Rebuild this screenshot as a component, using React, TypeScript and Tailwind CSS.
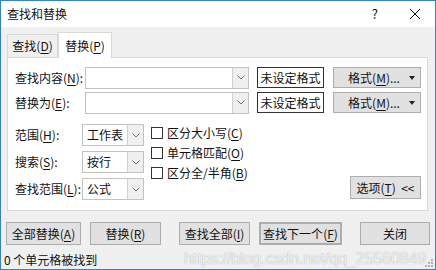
import React from 'react';

const font = { fontFamily: '"Noto Sans CJK SC", "Noto Sans", sans-serif' };

const Key: React.FC<{ k: string }> = ({ k }) => (
    <>
        (<span className="underline underline-offset-2">{k}</span>)
    </>
);

const Arrow: React.FC = () => (
    <svg width="8" height="5" viewBox="0 0 8 5" fill="none">
        <path d="M0.5 0.5 L4 4 L7.5 0.5" stroke="#707070" strokeWidth="1" />
    </svg>
);

const Combo: React.FC<{ value?: string; className: string }> = ({ value, className }) => (
    <div className={`flex h-[22px] border border-[#c2c2c2] bg-white ${className}`}>
        <div className="flex-1 flex items-center pl-[4px] text-[12px] text-[#111]">{value}</div>
        <div className="w-[16px] flex items-center justify-center border-l border-[#d0d0d0] bg-[#f0f0f0]">
            <Arrow />
        </div>
    </div>
);

const Btn: React.FC<{ children: React.ReactNode; className: string }> = ({ children, className }) => (
    <div className={`flex items-center justify-center border border-[#adadad] bg-[#e1e1e1] text-[12px] text-[#111] ${className}`}>
        {children}
    </div>
);

const Check: React.FC<{ children: React.ReactNode }> = ({ children }) => (
    <div className="flex items-center h-[20px]">
        <div className="w-[12px] h-[12px] border border-[#333] bg-white" />
        <span className="ml-[4px] text-[12px] text-[#111]">{children}</span>
    </div>
);

export default function App() {
    return (
        <div className="relative w-[436px] h-[270px] border border-[#2b83da] bg-[#f0f0f0] overflow-hidden" style={font}>
            {/* title bar */}
            <div className="flex items-center h-[26px] bg-white pl-[6px] text-[12px] text-[#111]">
                <span>查找和替换</span>
                <span className="ml-auto mr-[31px] text-[13px]">?</span>
                <svg width="12" height="12" viewBox="0 0 12 12" className="mr-[14px]">
                    <path d="M1 1 L11 11 M11 1 L1 11" stroke="#111" strokeWidth="1" />
                </svg>
            </div>

            {/* tabs */}
            <div className="flex items-end h-[30px] pl-[6px]">
                <div className="flex items-center justify-center w-[51px] h-[23px] border border-b-0 border-[#d9d9d9] bg-[#f0f0f0] text-[12px] text-[#111]">
                    查找<Key k="D" />
                </div>
                <div className="relative z-10 -mb-px flex items-center justify-center w-[54px] h-[26px] border border-b-0 border-[#d9d9d9] bg-white text-[12px] text-[#111]">
                    替换<Key k="P" />
                </div>
            </div>

            {/* panel */}
            <div className="ml-[6px] w-[421px] h-[154px] border border-[#d9d9d9] bg-white pt-[9px] pl-[7px]">
                <div className="flex items-center h-[21px]">
                    <span className="w-[70px] text-[12px] text-[#111]">查找内容<Key k="N" />:</span>
                    <Combo className="w-[164px]" />
                    <div className="ml-[8px] w-[67px] h-[21px] flex items-center justify-center border border-[#333] text-[12px] text-[#111]">未设定格式</div>
                    <Btn className="ml-[9px] w-[88px] h-[21px] relative">
                        <span className="mr-[6px]">格式<Key k="M" />...</span>
                        <span className="absolute right-[5px] top-[8px] w-0 h-0 border-l-[3px] border-r-[3px] border-t-[4px] border-l-transparent border-r-transparent border-t-[#222]" />
                    </Btn>
                </div>
                <div className="flex items-center h-[21px] mt-[4px]">
                    <span className="w-[70px] text-[12px] text-[#111]">替换为<Key k="E" />:</span>
                    <Combo className="w-[164px]" />
                    <div className="ml-[8px] w-[67px] h-[21px] flex items-center justify-center border border-[#333] text-[12px] text-[#111]">未设定格式</div>
                    <Btn className="ml-[9px] w-[88px] h-[21px] relative">
                        <span className="mr-[6px]">格式<Key k="M" />...</span>
                        <span className="absolute right-[5px] top-[8px] w-0 h-0 border-l-[3px] border-r-[3px] border-t-[4px] border-l-transparent border-r-transparent border-t-[#222]" />
                    </Btn>
                </div>

                <div className="flex mt-[11px]">
                    <div className="flex flex-col gap-[5px]">
                        <div className="flex items-center">
                            <span className="w-[67px] text-[12px] text-[#111]">范围<Key k="H" />:</span>
                            <Combo value="工作表" className="w-[62px]" />
                        </div>
                        <div className="flex items-center">
                            <span className="w-[67px] text-[12px] text-[#111]">搜索<Key k="S" />:</span>
                            <Combo value="按行" className="w-[62px]" />
                        </div>
                        <div className="flex items-center">
                            <span className="w-[67px] text-[12px] text-[#111]">查找范围<Key k="L" />:</span>
                            <Combo value="公式" className="w-[62px]" />
                        </div>
                    </div>
                    <div className="flex flex-col ml-[7px] -mt-[1px]">
                        <Check>区分大小写<Key k="C" /></Check>
                        <Check>单元格匹配<Key k="O" /></Check>
                        <Check>区分全/半角<Key k="B" /></Check>
                    </div>
                    <div className="flex-1 flex items-end justify-end pr-[6px] pb-[1px]">
                        <Btn className="w-[71px] h-[23px]">选项<Key k="T" />&nbsp;&nbsp;&lt;&lt;</Btn>
                    </div>
                </div>
            </div>

            {/* bottom buttons */}
            <div className="flex mt-[11px] pl-[5px]">
                <Btn className="w-[75px] h-[23px]">全部替换<Key k="A" /></Btn>
                <Btn className="ml-[9px] w-[71px] h-[23px]">替换<Key k="R" /></Btn>
                <Btn className="ml-[18px] w-[71px] h-[23px]">查找全部<Key k="I" /></Btn>
                <Btn className="ml-[9px] w-[83px] h-[23px] border-[#0078d7] border-2">查找下一个<Key k="F" /></Btn>
                <Btn className="ml-[18px] w-[70px] h-[23px]">关闭</Btn>
            </div>

            <div className="mt-[6px] pl-[3px] text-[12px] text-[#111]">0 个单元格被找到</div>

            {/* watermark */}
            <div
                className="absolute left-[183px] top-[246px] text-[16px] text-white/80 tracking-[-0.1px] whitespace-nowrap"
                style={{ fontFamily: '"Liberation Sans", Arial, sans-serif', textShadow: '0 0 1px #999' }}
            >
                https://blog.csdn.net/qq_25560849
            </div>

            {/* resize grip */}
            <svg width="10" height="10" viewBox="0 0 10 10" className="absolute right-[1px] bottom-[1px]">
                <rect x="7" y="1" width="2" height="2" fill="#b0b0b0" />
                <rect x="4" y="4" width="2" height="2" fill="#b0b0b0" />
                <rect x="7" y="4" width="2" height="2" fill="#b0b0b0" />
                <rect x="1" y="7" width="2" height="2" fill="#b0b0b0" />
                <rect x="4" y="7" width="2" height="2" fill="#b0b0b0" />
                <rect x="7" y="7" width="2" height="2" fill="#b0b0b0" />
            </svg>
        </div>
    );
}
